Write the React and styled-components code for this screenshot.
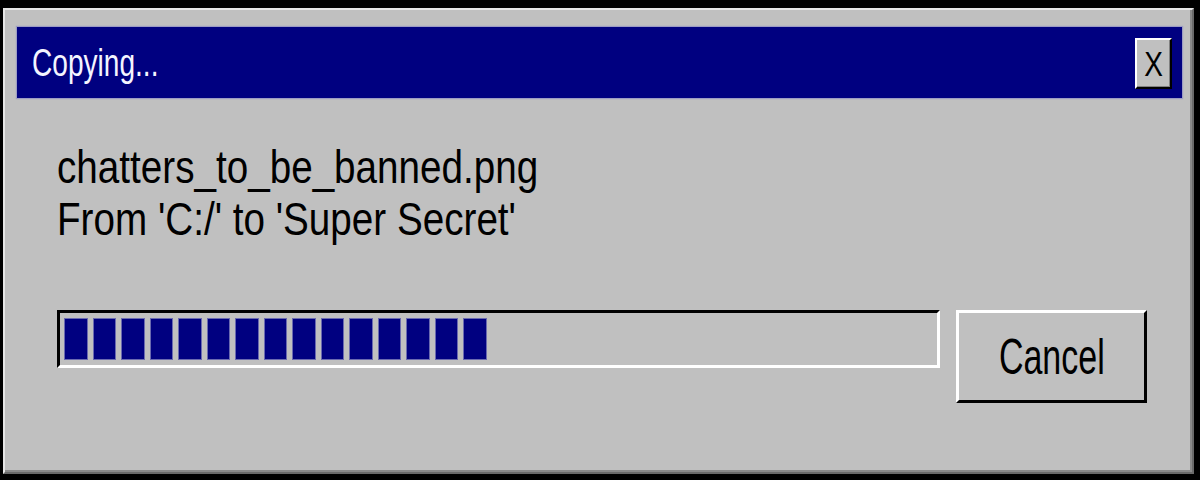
import React from 'react'
import styled, { createGlobalStyle } from 'styled-components';

const GlobalStyle = createGlobalStyle`
    html, body{
        margin: 0;
        padding: 0;
        background: #000000;
    }
    body{
        font-family: "Liberation Sans", Arial, sans-serif;
    }
`;

const CHUNKS = 15;

function App() {
    return (
        <Page>
            <GlobalStyle/>
            <DialogWindow>
                <TitleBar>
                    <h1><Squeezed $x={0.72}>Copying...</Squeezed></h1>
                    <CloseButton aria-label="Close"><Squeezed $x={0.8} $origin="center">X</Squeezed></CloseButton>
                </TitleBar>
                <DialogBody>
                    <FileInfo>
                        <p><Squeezed $x={0.84}>chatters_to_be_banned.png</Squeezed></p>
                        <p><Squeezed $x={0.84}>From 'C:/' to 'Super Secret'</Squeezed></p>
                    </FileInfo>
                    <ProgressRow>
                        <ProgressTrack>
                            {Array.from({length: CHUNKS}).map((_, i) => <Chunk key={i}/>)}
                        </ProgressTrack>
                        <CancelButton><Squeezed $x={0.68} $origin="center">Cancel</Squeezed></CancelButton>
                    </ProgressRow>
                </DialogBody>
            </DialogWindow>
        </Page>
    )
}

// the old bitmap font is tall and narrow, so the glyphs get squeezed sideways
const Squeezed = styled.span`
    display: inline-block;
    white-space: nowrap;
    transform: scaleX(${p => p.$x});
    transform-origin: ${p => p.$origin || 'left center'};
`;

const Page = styled.div`
    display: flex;
    padding: 8px 6px 6px 3px;
    width: 1200px;
    height: 480px;
    box-sizing: border-box;
`;

const DialogWindow = styled.div`
    flex: 1;
    display: flex;
    flex-direction: column;
    background: #c0c0c0;
    border: 2px solid;
    border-color: #e6e6e6 #6a6a6a #6a6a6a #e6e6e6;
    box-shadow: inset -2px -2px 0 #8a8a8a;
    box-sizing: border-box;
    padding: 17px 10px 0 12px;
`;

const TitleBar = styled.div`
    display: flex;
    align-items: center;
    justify-content: space-between;
    height: 71px;
    padding: 0 10px 0 15px;
    background: #000080;
    box-shadow: 0 0 1px 1px rgba(120,120,200,0.5);
    h1{
        margin: 0;
        color: #f4f4ff;
        font-size: 39px;
        font-weight: 400;
        line-height: 1;
    }
`;

const CloseButton = styled.button`
    display: flex;
    align-items: center;
    justify-content: center;
    width: 37px;
    height: 51px;
    margin-top: 2px;
    padding: 0;
    background: #c0c0c0;
    border: 2px solid;
    border-color: #ffffff #000000 #000000 #ffffff;
    box-shadow: inset -1px -1px 0 #808080;
    color: #000000;
    font-family: "Liberation Sans", Arial, sans-serif;
    font-size: 35px;
    line-height: 1;
`;

const DialogBody = styled.div`
    display: flex;
    flex-direction: column;
    padding: 43px 0 0 40px;
`;

const FileInfo = styled.div`
    p{
        margin: 0;
        color: #000000;
        font-size: 46px;
        line-height: 52px;
    }
`;

const ProgressRow = styled.div`
    display: flex;
    align-items: flex-start;
    gap: 16px;
    margin-top: 65px;
`;

const ProgressTrack = styled.div`
    display: flex;
    gap: 5px;
    width: 883px;
    height: 58px;
    box-sizing: border-box;
    padding: 5px 4px 2px 4px;
    border: 3px solid;
    border-color: #000000 #ffffff #ffffff #000000;
`;

const Chunk = styled.div`
    width: 23.5px;
    height: 42px;
    box-sizing: border-box;
    background: #000080;
    border: 1px solid #6a6ab0;
`;

const CancelButton = styled.button`
    width: 191px;
    height: 93px;
    padding: 0;
    background: #c0c0c0;
    border: 3px solid;
    border-color: #ffffff #000000 #000000 #ffffff;
    color: #000000;
    font-family: "Liberation Sans", Arial, sans-serif;
    font-size: 50px;
    line-height: 1;
`;

export default App
